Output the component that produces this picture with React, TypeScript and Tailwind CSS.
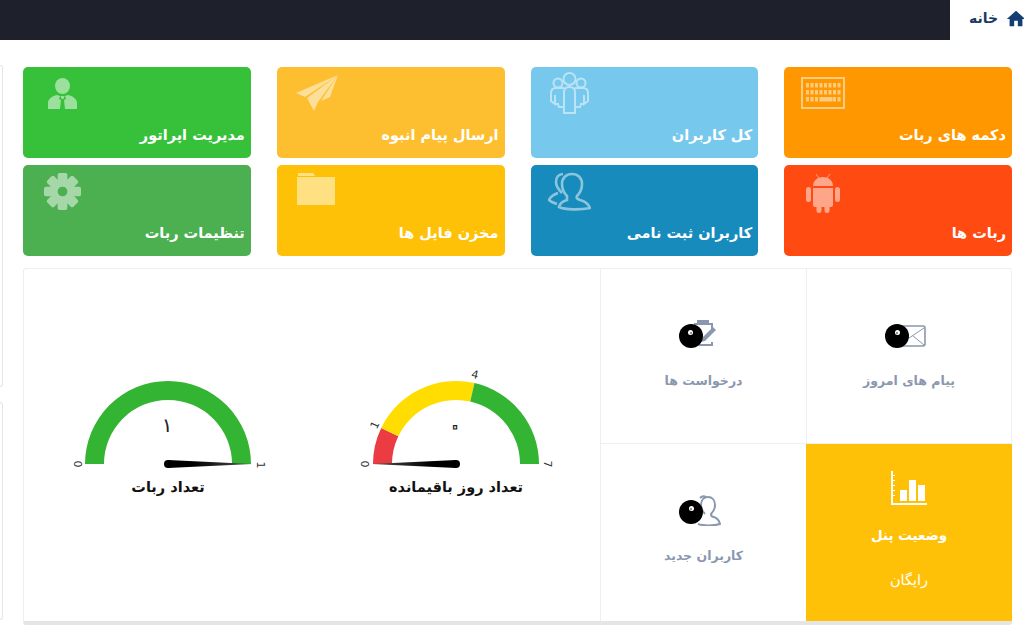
const font = { fontFamily: '"DejaVu Sans", "Noto Sans", sans-serif' };

function KeyboardIcon({ className }: { className?: string }) {
  const keys = [];
  for (let r = 0; r < 3; r++) {
    for (let c = 0; c < 8; c++) {
      if (r === 2 && c > 2 && c < 6) continue;
      keys.push(<rect key={r + "-" + c} x={5 + c * 4.5} y={6 + r * 7} width="3" height="4.5" />);
    }
  }
  return (
    <svg viewBox="0 0 44 32" className={className} fill="currentColor">
      <path fillRule="evenodd" d="M0 0h44v32H0zM2 2v28h40V2z" />
      {keys}
      <rect x="18.5" y="20" width="13" height="4.5" />
    </svg>
  );
}

function GroupIcon({ className }: { className?: string }) {
  return (
    <svg viewBox="0 0 39 42" className={className} fill="none" stroke="currentColor" strokeWidth="2">
      <circle cx="19.5" cy="7" r="6" />
      <circle cx="8" cy="11" r="4.5" />
      <circle cx="31" cy="11" r="4.5" />
      <path d="M14 41V20c0-3 2-5 5.500-5s5.500 2 5.500 5v21z" />
      <path d="M14 16H6c-3 0-5 2-5 5v8l4 3V23M5 32h3l1 3h5" />
      <path d="M25 16h8c3 0 5 2 5 5v8l-4 3V23M34 32h-3l-1 3h-5" />
    </svg>
  );
}

function PairIcon({ className }: { className?: string }) {
  return (
    <svg viewBox="0 0 43 39" className={className} fill="none" stroke="currentColor" strokeWidth="2.6">
      <path d="M19 24c-3-3-5-7-5-12 0-6 4-10 10-10s10 4 10 10c0 5-2 9-5 12-1 2 0 3 3 4 4 1 8 3 10 8-9 2-25 2-31-1 1-4 4-6 8-7z" />
      <path d="M14 21c-3-3-6-6-6-11 0-5 3-8 7-8M10 21c-3 1-7 3-9 7 2 2 5 3 8 4" />
    </svg>
  );
}

function OperatorIcon({ className }: { className?: string }) {
  return (
    <svg viewBox="0 0 29 31" className={className} fill="currentColor">
      <ellipse cx="14.500" cy="8" rx="7.500" ry="8" />
      <path d="M9 17c-5 1-9 4-9 8v6h12l1-9-2-1 1-3zM20 17c5 1 9 4 9 8v6H17l-1-9 2-1-1-3z" />
      <path d="M12.500 18h4l-1 3h-2z" />
    </svg>
  );
}

function PlaneIcon({ className }: { className?: string }) {
  return (
    <svg viewBox="0 0 42 36" className={className} fill="currentColor">
      <path d="M42 0 0 18l9 4z" />
      <path d="M42 0 11 23l7 13 4-9z" />
      <path d="M42 0 25 26l9-4z" />
    </svg>
  );
}

function AndroidIcon({ className }: { className?: string }) {
  return (
    <svg viewBox="0 0 34 40" className={className} fill="currentColor">
      <path d="M7 13c0-5 4-9 10-9s10 4 10 9z" />
      <path d="M10 1l3 4M24 1l-3 4" stroke="currentColor" strokeWidth="1" />
      <path d="M7 15h20v17a2 2 0 0 1-2 2H9a2 2 0 0 1-2-2z" />
      <rect x="0" y="14" width="5" height="15" rx="2.500" />
      <rect x="29" y="14" width="5" height="15" rx="2.500" />
      <rect x="10.500" y="32" width="5" height="8" rx="2.500" />
      <rect x="18.500" y="32" width="5" height="8" rx="2.500" />
    </svg>
  );
}

function FolderIcon({ className }: { className?: string }) {
  return (
    <svg viewBox="0 0 38 32" className={className} fill="currentColor">
      <path d="M1 0h15l2 3H1z" />
      <path d="M0 4h38v28H0z" />
    </svg>
  );
}

function GearIcon({ className }: { className?: string }) {
  return (
    <svg viewBox="-19 -19 38 38" className={className} fill="currentColor">
      {[0, 45, 90, 135, 180, 225, 270, 315].map((a) => (
        <rect key={a} x="-5" y="-19" width="10" height="9" rx="2" transform={`rotate(${a})`} />
      ))}
      <path fillRule="evenodd" d="M0-13a13 13 0 1 0 0 26a13 13 0 1 0 0-26zM0-5a5 5 0 1 1 0 10a5 5 0 1 1 0-10z" />
    </svg>
  );
}

function EnvelopeIcon({ className }: { className?: string }) {
  return (
    <svg viewBox="0 0 34 22" className={className} fill="none" stroke="currentColor">
      <rect x="1" y="1" width="32" height="20" rx="2" strokeWidth="1.600" />
      <path d="M2 3l15 10 15-10M2 20l11-9M32 20l-11-9" strokeWidth="1" />
    </svg>
  );
}

function ClipboardIcon({ className }: { className?: string }) {
  return (
    <svg viewBox="0 0 26 30" className={className} fill="currentColor">
      <path d="M6 1h12v5H6z" />
      <path d="M3 4h3v2H3zM18 4h4v7h-2V6h-2zM3 27h19v-4h-2v2H3z" />
      <path d="M11 19l11-11 3 3-11 11-4 1z" />
    </svg>
  );
}

function UserIcon({ className }: { className?: string }) {
  return (
    <svg viewBox="0 0 31 31" className={className} fill="none" stroke="currentColor" strokeWidth="2">
      <path d="M15 19c-2-2-4-5-4-9 0-5 3-8 7-8s7 3 7 8c0 4-2 7-4 9 0 2 1 3 3 3 3 1 5 3 6 7-6 2-17 2-22 0" />
      <path d="M10 3c2-2 4-2 6-1" />
    </svg>
  );
}

function ChartIcon({ className }: { className?: string }) {
  return (
    <svg viewBox="0 0 36 34" className={className} fill="currentColor">
      <path d="M0 0h2v32h34v2H0z" />
      <path d="M2 4h2v1H2zM2 9h2v1H2zM2 14h2v1H2zM2 19h2v1H2zM2 24h2v1H2z" />
      <rect x="9" y="19" width="7" height="11" />
      <rect x="18" y="9" width="7" height="21" />
      <rect x="27" y="14" width="7" height="16" />
    </svg>
  );
}

function Card({
  title,
  bg,
  icon,
}: {
  title: string;
  bg: string;
  icon: React.ReactNode;
}) {
  return (
    <div className={"flex h-[91px] flex-col justify-between rounded-[5px] px-[6px] pb-[12px] " + bg}>
      {icon}
      <div className="text-right text-[14.5px] leading-[22px] font-bold text-white">{title}</div>
    </div>
  );
}

function Dot() {
  return (
    <span className="absolute left-[-12px] top-[-12px] flex h-6 w-6 justify-center rounded-full bg-black pt-[6px]">
      <span className="flex h-[5px] w-[5px] items-center justify-center rounded-full bg-white">
        <span className="h-[2px] w-[2px] rounded-full bg-gray-500" />
      </span>
    </span>
  );
}

function StatCell({
  title,
  icon,
  className,
}: {
  title: string;
  icon: React.ReactNode;
  className?: string;
}) {
  return (
    <div className={"flex flex-col items-center justify-center gap-[20px] " + (className ?? "")}>
      <div className="flex h-[30px] items-center">{icon}</div>
      <div className="text-[12.5px] leading-5 font-bold text-[#8a97ae]">{title}</div>
    </div>
  );
}

function polar(r: number, frac: number) {
  const a = Math.PI * (1 - frac);
  return [r * Math.cos(a), -r * Math.sin(a)];
}

function arc(from: number, to: number) {
  const [x1, y1] = polar(83, from);
  const [x2, y2] = polar(83, to);
  const [x3, y3] = polar(64, to);
  const [x4, y4] = polar(64, from);
  return `M${x1} ${y1}A83 83 0 0 1 ${x2} ${y2}L${x3} ${y3}A64 64 0 0 0 ${x4} ${y4}Z`;
}

function Gauge({
  id,
  title,
  value,
  ring,
  segments,
  ticks,
  needle,
}: {
  id: string;
  title: string;
  value: string;
  ring?: boolean;
  segments: { from: number; to: number; color: string }[];
  ticks: { x: number; y: number; rotate: number; text: string }[];
  needle: "left" | "right";
}) {
  const tip = needle === "left" ? -84 : 84;
  return (
    <div className="flex flex-col items-center pt-[99px]">
      <svg viewBox="-100 -96 200 108" className="h-[108px] w-[200px]">
        <defs>
          <linearGradient id={id} x1={needle === "left" ? "1" : "0"} x2={needle === "left" ? "0" : "1"} y1="0" y2="0">
            <stop offset="0.3" stopColor="#000" />
            <stop offset="1" stopColor="#555" />
          </linearGradient>
        </defs>
        {segments.map((s) => (
          <path key={s.color} d={arc(s.from, s.to)} fill={s.color} />
        ))}
        <polygon points={`0 -4 ${tip} 0 0 4`} fill={`url(#${id})`} />
        <circle r="4" fill="#000" />
        {ticks.map((t) => (
          <text
            key={t.text}
            x={t.x}
            y={t.y}
            transform={`rotate(${t.rotate} ${t.x} ${t.y})`}
            textAnchor="middle"
            dominantBaseline="central"
            fontSize="11"
            fill="#333"
            fontFamily='"DejaVu Sans", sans-serif'
          >
            {t.text}
          </text>
        ))}
        <text
          x="-1"
          y="-39"
          textAnchor="middle"
          dominantBaseline="central"
          fontSize={ring ? 28 : 20}
          fill={ring ? "#fff" : "#222"}
          stroke={ring ? "#222" : "none"}
          strokeWidth={ring ? 1.2 : 0}
          fontFamily='"DejaVu Sans", sans-serif'
        >
          {value}
        </text>
      </svg>
      <div className="text-[14.5px] leading-[22px] font-bold text-[#111]">{title}</div>
    </div>
  );
}

export default function App() {
  return (
    <div dir="rtl" className="h-[634px] w-[1024px] overflow-hidden bg-white" style={font}>
      <header className="flex h-10 items-center">
        <div className="flex w-[74px] items-center justify-start gap-[7px] pb-[3px] text-[#1b3a63]">
          <svg viewBox="0 0 24 24" className="-mr-[3px] h-[22px] w-[22px] shrink-0" fill="#123f73">
            <path d="M10 20v-6h4v6h5v-8h3L12 3 2 12h3v8z" />
          </svg>
          <span className="text-[14px] font-bold">خانه</span>
        </div>
        <div className="h-10 flex-1 bg-[#1e202c]" />
      </header>

      <div className="flex">
        <main className="w-[1001px] pr-3 pt-[27px]">
          <div className="grid grid-cols-4 gap-x-[26px] gap-y-[7px]">
            <Card title="دکمه های ربات" bg="bg-[#ff9800]" icon={<KeyboardIcon className="ml-[11px] mt-[10px] h-8 w-11 self-end text-white opacity-50" />} />
            <Card title="کل کاربران" bg="bg-[#77c8ed]" icon={<GroupIcon className="ml-[13px] mt-[5px] h-[42px] w-[39px] self-end text-white opacity-50" />} />
            <Card title="ارسال پیام انبوه" bg="bg-[#fdbf30]" icon={<PlaneIcon className="ml-[13px] mt-2 h-9 w-[42px] self-end text-white opacity-50" />} />
            <Card title="مدیریت اپراتور" bg="bg-[#37c13b]" icon={<OperatorIcon className="ml-[19px] mt-[11px] h-[31px] w-[29px] self-end text-white opacity-50" />} />
            <Card title="ربات ها" bg="bg-[#ff4a12]" icon={<AndroidIcon className="ml-[16px] mt-2 h-10 w-[34px] self-end text-white opacity-50" />} />
            <Card title="کاربران ثبت نامی" bg="bg-[#178cbc]" icon={<PairIcon className="ml-[11px] mt-[7px] h-[39px] w-[43px] self-end text-white opacity-50" />} />
            <Card title="مخزن فایل ها" bg="bg-[#ffc107]" icon={<FolderIcon className="ml-[14px] mt-2 h-8 w-[38px] self-end text-white opacity-50" />} />
            <Card title="تنظیمات ربات" bg="bg-[#4caf50]" icon={<GearIcon className="ml-[15px] mt-2 h-[37px] w-[37px] self-end text-white opacity-50" />} />
          </div>

          <section className="mt-3 flex h-[357px] overflow-hidden rounded-[3px] border border-r-0 border-b-4 border-[#eceef0] border-b-[#e4e5e6]">
            <div className="grid w-[412px] shrink-0 grid-cols-2 grid-rows-[175px_177px]">
              <StatCell
                title="پیام های امروز"
                className="border-b border-l border-r border-[#eeeff1]"
                icon={
                  <span className="relative block h-[22px] w-[34px]">
                    <EnvelopeIcon className="h-[22px] w-[34px] text-[#8a97ae]" />
                    <span className="absolute left-[5px] top-[11px] block">
                      <Dot />
                    </span>
                  </span>
                }
              />
              <StatCell
                title="درخواست ها"
                className="border-b border-l border-[#eeeff1]"
                icon={
                  <span className="relative block h-[30px] w-[26px] -translate-y-[2px]">
                    <ClipboardIcon className="h-[30px] w-[26px] text-[#8a97ae]" />
                    <span className="absolute left-0 top-[17px] block">
                      <Dot />
                    </span>
                  </span>
                }
              />
              <div className="flex flex-col items-center bg-[#ffc107] pt-[27px] text-white">
                <ChartIcon className="h-[34px] w-9" />
                <div className="mt-[20px] text-[13.5px] leading-5 font-bold">وضعیت پنل</div>
                <div className="mt-[25px] text-[14.5px] leading-5">رایگان</div>
              </div>
              <StatCell
                title="کاربران جدید"
                className="border-l border-[#eeeff1] pb-1"
                icon={
                  <span className="relative block h-[31px] w-[31px] translate-x-[2px]">
                    <UserIcon className="h-[31px] w-[31px] text-[#8a97ae]" />
                    <span className="absolute left-[1px] top-[17px] block">
                      <Dot />
                    </span>
                  </span>
                }
              />
            </div>
            <div className="grid flex-1 grid-cols-2">
              <Gauge
                id="needle-days"
                title="تعداد روز باقیمانده"
                value="۰"
                ring
                needle="left"
                segments={[
                  { from: 0, to: 1 / 7, color: "#ea3c42" },
                  { from: 1 / 7, to: 4 / 7, color: "#ffdd00" },
                  { from: 4 / 7, to: 1, color: "#33b433" },
                ]}
                ticks={[
                  { x: -92, y: 0, rotate: 90, text: "0" },
                  { x: -81, y: -39, rotate: -65, text: "1" },
                  { x: 19, y: -89, rotate: 13, text: "4" },
                  { x: 91, y: 0, rotate: 90, text: "7" },
                ]}
              />
              <Gauge
                id="needle-bots"
                title="تعداد ربات"
                value="۱"
                needle="right"
                segments={[{ from: 0, to: 1, color: "#33b433" }]}
                ticks={[
                  { x: -91, y: 0, rotate: 90, text: "0" },
                  { x: 92, y: 1, rotate: 90, text: "1" },
                ]}
              />
            </div>
          </section>
        </main>
        <aside className="flex w-[23px] flex-col items-end gap-[15px] pt-[25px]">
          <div className="h-[322px] w-[3px] rounded-r-[3px] border-y border-r border-[#e3e5e8]" />
          <div className="h-[218px] w-[3px] rounded-r-[3px] border-y border-r border-[#e3e5e8]" />
        </aside>
      </div>
    </div>
  );
}
